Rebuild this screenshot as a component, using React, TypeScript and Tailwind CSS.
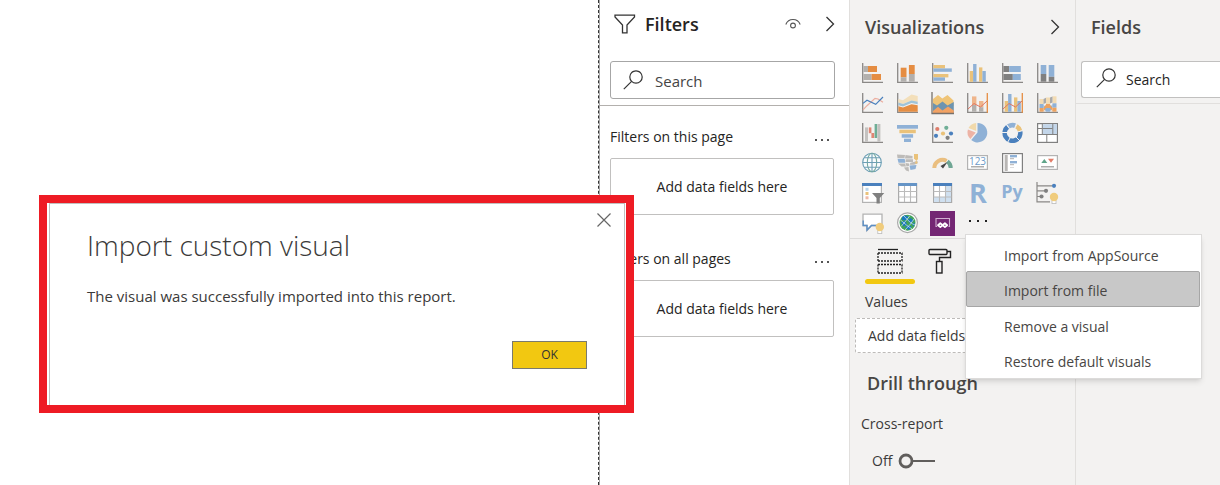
import type { ReactNode } from 'react';

const BLUE = '#8fb1d6';
const DEEP = '#4a80bd';
const ORANGE = '#e58d42';
const YELLOW = '#eac27a';
const GREY = '#b3b0ad';
const DARK = '#808080';

function Axes() {
  return <path d="M.7 0V19.3H21" fill="none" stroke="#8a8886" strokeWidth="1.3" />;
}

type Bar = [x: number, y: number, w: number, h: number, fill: string];

function Bars({ items }: { items: Bar[] }) {
  return (
    <>
      {items.map(([x, y, w, h, fill], i) => (
        <rect key={i} x={x} y={y} width={w} height={h} fill={fill} />
      ))}
    </>
  );
}

function Bulb({ x, y }: { x: number; y: number }) {
  return (
    <g transform={`translate(${x} ${y})`}>
      <rect x="-2" y="3" width="4" height="3.6" fill="#fff" stroke="#bbb" strokeWidth=".8" />
      <circle r="4.2" fill="#f0cc7c" />
    </g>
  );
}

const visuals: { name: string; art: ReactNode }[] = [
  {
    name: 'Stacked bar chart',
    art: <><Axes /><Bars items={[[1.4, 3, 4.6, 6, GREY], [6, 3, 9, 6, ORANGE], [1.4, 11, 8.2, 6, GREY], [9.6, 11, 9.4, 6, ORANGE]]} /></>,
  },
  {
    name: 'Stacked column chart',
    art: <><Axes /><Bars items={[[3.7, 4.7, 5.8, 9.6, ORANGE], [3.7, 14.3, 5.8, 4.4, GREY], [11.9, 2, 5.8, 9, ORANGE], [11.9, 11, 5.8, 7.7, GREY]]} /></>,
  },
  {
    name: 'Clustered bar chart',
    art: <><Axes /><Bars items={[[1.4, 2, 11.6, 3.4, YELLOW], [1.4, 5.4, 18.4, 3.4, BLUE], [1.4, 11, 15, 3.4, YELLOW], [1.4, 14.4, 11.6, 3.4, BLUE]]} /></>,
  },
  {
    name: 'Clustered column chart',
    art: <><Axes /><Bars items={[[2.7, 8, 3.4, 10.7, YELLOW], [6.1, 1, 3.4, 17.7, BLUE], [12, 4.4, 3.4, 14.3, YELLOW], [15.4, 8, 3.4, 10.7, BLUE]]} /></>,
  },
  {
    name: '100% stacked bar chart',
    art: <><Axes /><Bars items={[[1.4, 3, 5.8, 6, DARK], [7.2, 3, 11.6, 6, BLUE], [1.4, 11, 9.4, 6, DARK], [10.8, 11, 8, 6, BLUE]]} /></>,
  },
  {
    name: '100% stacked column chart',
    art: <><Axes /><Bars items={[[3.7, 2, 5.6, 9, BLUE], [3.7, 11, 5.6, 7.7, DARK], [11.7, 2, 5.6, 11.8, BLUE], [11.7, 13.8, 5.6, 4.9, DARK]]} /></>,
  },
  {
    name: 'Line chart',
    art: (
      <>
        <Axes />
        <path d="M1 16.8 5 12.7 13 5.3 16 6 21 9.3" fill="none" stroke="#ecae9f" strokeWidth="1.2" />
        <path d="M1 10.4 5 7.3 13.7 11.3 21 4" fill="none" stroke={DEEP} strokeWidth="1.2" />
      </>
    ),
  },
  {
    name: 'Area chart',
    art: (
      <>
        <Axes />
        <path d="M1.4 6 6 7.3 14.5 1.5 20.7 3V9L14.5 7.5 6 11 1.4 10Z" fill="#f3dfba" />
        <path d="M1.4 9.5 6 11 14.5 7.5 20.7 8.7V11.2L14.5 10 6 13.5 1.4 12.2Z" fill="#9fc3d8" />
        <path d="M1.4 13.2 6 14.5 14.5 11.3 20.7 12.2V18.7H1.4Z" fill={ORANGE} />
      </>
    ),
  },
  {
    name: 'Stacked area chart',
    art: (
      <>
        <path d="M1 6 6 2 10.3 5.5 15.5 2 21.500 7.500V13H1Z" fill="#efc477" />
        <path d="M1 10 5 12.500 10.500 8.500 15.500 12.500 21.800 9V20H1Z" fill="#6d94b0" />
        <path d="M1 20V18L6 13.800 10.500 17.500 16 13.500 21.800 17.500V20Z" fill="#f2a263" />
        <path d="M0-1V20.500H22" fill="none" stroke="#77716b" strokeWidth="1.3" />
      </>
    ),
  },
  {
    name: 'Line and stacked column chart',
    art: (
      <>
        <Axes />
        <Bars items={[[5, 3.4, 4.4, 8.6, '#efb58b'], [5, 12, 4.4, 6.7, GREY], [12, 8, 4.4, 6.2, '#efb58b'], [12, 14.2, 4.4, 4.5, GREY]]} />
        <path d="M1 16 7 10.5 13.5 14 20 8" fill="none" stroke="#df7460" strokeWidth="1" />
        <path d="M20.3 0V19.8" stroke={ORANGE} strokeWidth="1.3" />
      </>
    ),
  },
  {
    name: 'Line and clustered column chart',
    art: (
      <>
        <Axes />
        <Bars items={[[2.7, 8, 3.4, 10.7, YELLOW], [6.1, 1, 3.4, 17.7, BLUE], [12, 4.4, 3.4, 14.3, YELLOW], [15.4, 8, 3.4, 10.7, BLUE]]} />
        <path d="M1 16 7 10.5 13.5 14 20 8" fill="none" stroke="#df7460" strokeWidth="1" />
        <path d="M20.3 0V19.8" stroke={ORANGE} strokeWidth="1.3" />
      </>
    ),
  },
  {
    name: 'Ribbon chart',
    art: (
      <>
        <Axes />
        <Bars
          items={[
            [2.5, 6, 4, 5, '#f3dcb4'], [2.5, 11, 4, 4, BLUE], [2.5, 15, 4, 3.7, '#eda25f'],
            [9, 4.5, 4, 6.5, '#f3dcb4'], [9, 11, 4, 4, '#eda25f'], [9, 15, 4, 3.7, BLUE],
            [15.5, 3.3, 4, 7, '#f3dcb4'], [15.5, 10.3, 4, 4.4, BLUE], [15.5, 14.7, 4, 4, '#eda25f'],
          ]}
        />
        <path d="M6.5 6 9 4.700V10L6.500 11ZM13 4.500 15.500 3.500V9.500L13 10.500Z" fill="#a9a9a9" />
        <path d="M6.5 11.500 9 15V18.500L6.500 15ZM13 15 15.500 11V14.500L13 18.500Z" fill={BLUE} />
        <path d="M6.5 15 9 11.500V15L6.500 18.500ZM13 11.500 15.500 15V18.500L13 15Z" fill="#eda25f" />
      </>
    ),
  },
  {
    name: 'Waterfall chart',
    art: <><Axes /><Bars items={[[3, 4.4, 3, 14.3, '#c4c2c0'], [6.8, 4.4, 2.6, 5.8, '#e08674'], [9.4, 10, 2.8, 5, '#e08674'], [12.6, 1, 2.6, 14, '#6fae96'], [15.4, 1, 3, 17.7, '#c4c2c0']]} /></>,
  },
  {
    name: 'Funnel',
    art: <Bars items={[[0, 2, 21, 3.7, BLUE], [2.4, 6.7, 16.4, 3.5, YELLOW], [4.7, 11.2, 11.4, 3.5, BLUE], [7, 15.7, 7, 3.3, BLUE]]} />,
  },
  {
    name: 'Scatter chart',
    art: (
      <>
        <Axes />
        <circle cx="5.3" cy="6" r="2.1" fill="#de7d6b" />
        <circle cx="14.3" cy="4.8" r="2.1" fill="#6fae96" />
        <circle cx="11" cy="10.5" r="2.1" fill={YELLOW} />
        <circle cx="4" cy="12.8" r="2.1" fill={DEEP} />
        <circle cx="19" cy="10.5" r="2.1" fill={DEEP} />
        <circle cx="15.6" cy="14.8" r="2.1" fill={DARK} />
      </>
    ),
  },
  {
    name: 'Pie chart',
    art: (
      <>
        <path d="M10.5 9.5V0A9.7 9.7 0 1 1 4.2 17Z" fill={BLUE} />
        <path d="M9.2 8V0A9.3 9.3 0 0 0 1.500 5Z" fill="#f1d9ab" />
        <path d="M8.700 9.400.900 6.600A9.300 9.300 0 0 0 3.400 16Z" fill="#edb3a5" />
      </>
    ),
  },
  {
    name: 'Donut chart',
    art: (
      <g fill="none" strokeWidth="4.600">
        <path d="M18.100 8.300A7.800 7.800 0 1 1 5.600 3.900" stroke={DEEP} />
        <path d="M6.200 3.500A7.800 7.800 0 0 1 13.600 2.800" stroke={BLUE} />
        <path d="M14.400 3.200A7.800 7.800 0 0 1 18 7.800" stroke={YELLOW} />
        <path d="M7.500 5.500 3.500 0M12.700 5 15-1M15.500 9 22 7.300M14 14 18.500 18.500M8 15 5 20.500M5 9.500H-1" stroke="#f3f2f1" strokeWidth="1" />
      </g>
    ),
  },
  {
    name: 'Treemap',
    art: (
      <>
        <rect x=".6" y=".6" width="19.8" height="18.8" fill="#fff" stroke="#808080" strokeWidth="1.2" />
        <path d="M5.5 1.2H20V11H5.5Z" fill="#c3d6ea" />
        <path d="M5.3 0V11.5M0 11.5H20.4M9.8 11.5V20M5.3 5.5H15.5M15.8 0V11.5M1 5.5H5" stroke="#808080" strokeWidth="1" />
      </>
    ),
  },
  {
    name: 'Map',
    art: (
      <g fill="none" stroke="#6d9fb5" strokeWidth="1.1">
        <circle cx="10" cy="9.5" r="9.3" fill="#f8fbfd" />
        <ellipse cx="10" cy="9.5" rx="4.7" ry="9.3" stroke="#79ab9f" />
        <path d="M10 .2V18.8M.7 9.5H19.3M2.2 4.8H17.8M2.2 14.2H17.8" />
      </g>
    ),
  },
  {
    name: 'Filled map',
    art: (
      <>
        <path d="M0 1.500 8 2 7.500 5H.5ZM8.500 2 15.500 3V5.500H8ZM1 10.500H8L9 13.500 4.500 13.500ZM8.700 6.300H16V9H8.500Z" fill="#bdbbb8" />
        <path d="M.5 5.700H7.700L8.300 9.700H1.500ZM12.500 12.500 19.500 12 18.500 16 13.500 17Z" fill={BLUE} />
        <path d="M13.500 9.700 20.500 8V10.500L17 11.700H12.500ZM8.500 10 12 10.500V13L9.500 13.500ZM7 14.500 11.500 14 12 18.500 9 17.500Z" fill="#bdbbb8" />
        <path d="M17 1H21V6L19.500 8 17 5.500Z" fill={YELLOW} />
        <circle cx="19.300" cy="9.500" r="1.200" fill={YELLOW} />
      </>
    ),
  },
  {
    name: 'Gauge',
    art: (
      <>
        <path d="M2.300 15A8.200 8.200 0 0 1 14.600 7.900" fill="none" stroke="#eabf80" strokeWidth="4" />
        <path d="M15.400 8.400A8.200 8.200 0 0 1 18.700 15" fill="none" stroke="#6fa694" strokeWidth="4" />
        <path d="M8.500 13 15.500 9 11 15.500Z" fill="#444" />
      </>
    ),
  },
  {
    name: 'Card',
    art: (
      <>
        <rect x=".6" y="2.6" width="19.8" height="13.8" fill="#fff" stroke="#b3b3b3" strokeWidth="1.2" />
        <text x="10.5" y="11.500" textAnchor="middle" className="font-['Open_Sans',sans-serif] text-[10px]" fill="#6c9bc9">123</text>
        <path d="M4 13.8H17" stroke="#999" strokeWidth="1.2" />
      </>
    ),
  },
  {
    name: 'Multi-row card',
    art: (
      <>
        <rect x=".6" y=".6" width="19.8" height="18.8" fill="#fff" stroke="#808080" strokeWidth="1.2" />
        <Bars items={[[2.7, 2, 3, 16, '#b9b7b5'], [8, 2, 7, 2.4, BLUE], [8, 5.2, 4, 1, GREY], [8, 8, 7, 2.4, BLUE], [8, 11.2, 4, 1, GREY], [8, 14, 4, 1, '#ddd']]} />
      </>
    ),
  },
  {
    name: 'KPI',
    art: (
      <>
        <rect x=".6" y="2.6" width="19.8" height="13.8" fill="#fff" stroke="#b3b3b3" strokeWidth="1.2" />
        <path d="M4.3 10 7.3 6 10.3 10Z" fill="#5fa58a" />
        <path d="M11 5.700H17L14 9.800Z" fill="#e27c68" />
        <path d="M4 13.800H17" stroke="#999" strokeWidth="1.200" />
      </>
    ),
  },
  {
    name: 'Slicer',
    art: (
      <>
        <rect x=".6" y=".6" width="18.8" height="18.8" fill="#fff" stroke="#b3b3b3" strokeWidth="1.2" />
        <Bars items={[[0, 0, 20, 3, DEEP], [3.5, 4.8, 3, 3, '#b9d4ea'], [3.5, 9, 3, 3, YELLOW], [3.5, 13.3, 3, 3, '#efb9a8']]} />
        <path d="M10 10H22.3L17.8 15V20.5H14.5V15Z" fill="#808080" />
      </>
    ),
  },
  {
    name: 'Table',
    art: (
      <>
        <rect x="1.6" y=".6" width="18" height="18.8" fill="#fff" stroke="#aaa" strokeWidth="1.2" />
        <path d="M7.5 3V19M13.5 3V19M1.6 8.5H19.5M1.6 14H19.5" stroke="#bbb" strokeWidth="1.1" />
        <rect x="1" y="0" width="19" height="3" fill="#6594c6" />
      </>
    ),
  },
  {
    name: 'Matrix',
    art: (
      <>
        <rect x="1.6" y=".6" width="18" height="18.8" fill="#fff" stroke="#aaa" strokeWidth="1.2" />
        <path d="M13.5 3H19V19H2V14H13.5Z" fill="#cfe0f0" />
        <path d="M7.5 3V19M13.5 3V19M1.6 8.5H19.5M1.6 14H19.5" stroke="#bbb" strokeWidth="1.1" />
        <rect x="1" y="0" width="19" height="3" fill={DEEP} />
      </>
    ),
  },
  {
    name: 'R script visual',
    art: <text x="11" y="19.5" textAnchor="middle" className="font-['Open_Sans',sans-serif] text-[27px] font-bold" fill={BLUE}>R</text>,
  },
  {
    name: 'Python visual',
    art: <text x="10" y="15" textAnchor="middle" className="font-['Open_Sans',sans-serif] text-[18px] font-bold" fill={BLUE}>Py</text>,
  },
  {
    name: 'Key influencers',
    art: (
      <>
        <path d="M0-1V18.8H13M0 2.8H15M0 7.8H8M0 13.5H4" fill="none" stroke="#8a8886" strokeWidth="1.2" />
        <circle cx="17" cy="2.8" r="2.1" fill={DEEP} />
        <circle cx="9" cy="7.8" r="2.1" fill={DARK} />
        <circle cx="4.5" cy="13.5" r="2.1" fill={DARK} />
        <Bulb x={17} y={14} />
      </>
    ),
  },
  {
    name: 'Q&A',
    art: (
      <>
        <path d="M1 1.2H20V12.5H9.5L5 17.5V12.5H1Z" fill="#fff" stroke="#b3b3b3" strokeWidth="1.3" />
        <path d="M1.2 7.5V12.5H5V17L9.5 12.5H15" fill="none" stroke="#5c8fc5" strokeWidth="1.4" />
        <Bulb x={17.8} y={14} />
      </>
    ),
  },
  {
    name: 'ArcGIS Maps',
    art: (
      <>
        <circle cx="10.5" cy="9.7" r="9.9" fill="#fff" stroke="#a9a9a9" strokeWidth="1.2" />
        <circle cx="10.5" cy="9.7" r="8" fill="#43a35a" />
        <path d="M5 4 8 2.200 12 4 9 7.500 5 7ZM4 9 8.500 8 10 11.500 6.500 13.500ZM10.500 7 14 5 16.500 8 13.500 11ZM8 14.500 11.500 12 14.500 13.500 12 17ZM15 11 18 9.500 16.500 13.500Z" fill="#1878bf" />
        <path d="M3 6.500Q10 13 15 16M7 3Q14 11 18 12M4 13.500Q9 8 13 2.500M8 17Q14 11 17 6" fill="none" stroke="#d8ebf5" strokeWidth=".7" />
      </>
    ),
  },
  {
    name: 'Power Apps',
    art: (
      <>
        <rect x="-2" y="-2" width="25" height="25" fill="#742774" />
        <path d="M5 13.500H4V5.500H17.500V13.500H16.500" fill="none" stroke="#cfaed0" strokeWidth="1.1" />
        <path d="M10.600 12.200 8.300 10.300 6 12.200 8.300 14.100ZM10.600 12.200 12.900 10.300 15.200 12.200 12.900 14.100Z" fill="none" stroke="#fff" strokeWidth="1.8" strokeLinejoin="round" />
      </>
    ),
  },
];

const menuItems = ['Import from AppSource', 'Import from file', 'Remove a visual', 'Restore default visuals'];

function SearchIcon() {
  return (
    <svg viewBox="0 0 20 20" className="h-5 w-5 shrink-0" fill="none" stroke="#333" strokeWidth="1.2" aria-hidden="true">
      <circle cx="13" cy="7" r="6.2" />
      <path d="M8.6 11.4.8 19.2" />
    </svg>
  );
}

function Chevron() {
  return (
    <svg viewBox="0 0 10 16" className="h-4 w-[10px]" fill="none" stroke="#333" strokeWidth="1.3" aria-hidden="true">
      <path d="M1.5 1 8.5 8 1.5 15" />
    </svg>
  );
}

function FilterSection({ title }: { title: string }) {
  return (
    <section className="mb-[34px]">
      <div className="flex h-5 items-center justify-between pr-[5px]">
        <h3 className="text-sm">{title}</h3>
        <button aria-label={`${title} options`} className="flex gap-1 pt-[6px]">
          <span className="h-[2px] w-[2px] bg-[#555]" />
          <span className="h-[2px] w-[2px] bg-[#555]" />
          <span className="h-[2px] w-[2px] bg-[#555]" />
        </button>
      </div>
      <div className="mt-[11px] flex h-[57px] items-center justify-center rounded-[2px] border border-[#c1c0bf] text-sm">
        Add data fields here
      </div>
    </section>
  );
}

function FiltersPane() {
  return (
    <aside className="w-[250px] shrink-0 border-l border-[#a6a6a6] bg-white">
      <header className="flex h-[61px] items-center pr-[14px] pb-[13px] pl-[14px]">
        <svg viewBox="0 0 22 20" className="h-5 w-[22px]" fill="none" stroke="#333" strokeWidth="1.3" aria-hidden="true">
          <path d="M1 1.2H20.5V3L13 11V18.8H8.5V11L1 3Z" />
        </svg>
        <h2 className="ml-[9px] flex-1 text-lg font-semibold text-[#252423]">Filters</h2>
        <button aria-label="Show or hide filters" className="mr-6">
          <svg viewBox="0 0 16 12" className="h-3 w-4" fill="none" stroke="#555" strokeWidth="1.1" aria-hidden="true">
            <path d="M.8 6.5C2.2 3 5 1.5 8 1.5S13.8 3 15.2 6.5" />
            <circle cx="8" cy="7.5" r="2.4" />
          </svg>
        </button>
        <button aria-label="Collapse filters">
          <Chevron />
        </button>
      </header>
      <div className="border-b border-[#b3b0ad] pr-[14px] pb-[6px] pl-[10px]">
        <label className="flex h-[38px] items-center gap-3 rounded-[3px] border border-[#a6a6a6] px-3">
          <SearchIcon />
          <input type="search" aria-label="Search filters" placeholder="Search" className="min-w-0 flex-1 pt-[2px] text-[15px] outline-none placeholder:text-[#444]" />
        </label>
      </div>
      <div className="pt-[21px] pr-[15px] pl-[10px]">
        <FilterSection title="Filters on this page" />
        <FilterSection title="Filters on all pages" />
      </div>
    </aside>
  );
}

function VisualMenu() {
  return (
    <div role="menu" className="absolute top-[26px] left-[5px] z-10 w-[237px] border border-[#dcdbda] bg-white pt-[1px] pr-[1px] pb-[1px] text-sm text-[#484644] shadow-md">
      {menuItems.map((item) => (
        <button
          key={item}
          role="menuitem"
          className={
            item === 'Import from file'
              ? 'flex h-9 w-full items-center rounded-[2px] border border-[#a6a6a6] bg-[#c8c8c8] pt-1 pl-[37px]'
              : 'flex h-[35px] w-full items-center pl-[38px] pt-1'
          }
        >
          {item}
        </button>
      ))}
    </div>
  );
}

function VisualizationsPane() {
  return (
    <aside className="w-[226px] shrink-0 border-l border-[#e1dfdd] bg-[#f3f2f1] text-[#3b3a39]">
      <header className="flex h-[58px] items-center justify-between pr-[15px] pb-1 pl-[15px]">
        <h2 className="text-lg font-semibold text-[#484644]">Visualizations</h2>
        <button aria-label="Collapse visualizations">
          <Chevron />
        </button>
      </header>
      <div className="grid grid-cols-[repeat(6,35px)] border-b border-[#dcdbda] pl-[5px]">
        {visuals.map(({ name, art }) => (
          <button key={name} aria-label={name} className="flex h-[30px] items-center justify-center">
            <svg viewBox="0 0 21 20" className="h-5 w-[21px] overflow-visible" aria-hidden="true">
              {art}
            </svg>
          </button>
        ))}
        <div className="relative">
          <button aria-label="More options" className="flex h-[26px] w-full items-center justify-center gap-[6px]">
            <span className="h-[2px] w-[2px] bg-[#222]" />
            <span className="h-[2px] w-[2px] bg-[#222]" />
            <span className="h-[2px] w-[2px] bg-[#222]" />
          </button>
          <VisualMenu />
        </div>
      </div>
      <div className="flex gap-[2px] pl-[15px] pt-[9px]">
        <button aria-label="Fields" className="flex flex-col items-center gap-[5px]">
          <svg viewBox="0 0 26 26" className="h-[26px] w-[26px]" fill="none" stroke="#222" strokeWidth="1.3" aria-hidden="true">
            <path d="M1 1.5H21" />
            <path d="M1 5H25.5M1 13H25.5M1 16.5H25.5M1 25H25.5M1 5V13M25 5V13M1 16.5V25M25 16.5V25" strokeDasharray="2 1" />
          </svg>
          <span className="h-[5px] w-[50px] rounded-full bg-[#f2c811]" />
        </button>
        <button aria-label="Format" className="flex w-[46px] justify-center">
          <svg viewBox="0 0 24 26" className="h-[26px] w-6" fill="none" stroke="#222" strokeWidth="1.4" aria-hidden="true">
            <rect x="1" y="1.5" width="18" height="5" rx="1" />
            <path d="M19 3.5H22.5V9.5H11.500V13.500" />
            <rect x="8.500" y="13.500" width="5.500" height="11.500" />
          </svg>
        </button>
      </div>
      <h3 className="pt-[8px] pl-[15px] text-sm leading-5">Values</h3>
      <div className="mt-[6px] mr-[10px] ml-[5px] flex h-[35px] items-center rounded-[2px] border border-dashed border-[#bdbbb9] bg-white pl-3 text-sm">
        Add data fields here
      </div>
      <h2 className="pt-4 pl-[17px] text-lg leading-7 font-semibold text-[#484644]">Drill through</h2>
      <p className="pt-[17px] pl-[11px] text-sm leading-5">Cross-report</p>
      <label className="mt-[17px] mb-[14px] flex h-5 items-center gap-[6px] pl-[22px] text-sm">
        <span>Off</span>
        <input type="checkbox" role="switch" aria-label="Cross-report" className="sr-only" />
        <svg viewBox="0 0 38 16" className="h-4 w-[38px]" fill="none" stroke="#605e5c" aria-hidden="true">
          <circle cx="8" cy="8" r="6" strokeWidth="2.8" />
          <path d="M14.5 8H37" strokeWidth="2" />
        </svg>
      </label>
    </aside>
  );
}

function FieldsPane() {
  return (
    <aside className="w-[145px] shrink-0 border-l border-[#e1dfdd] bg-[#f3f2f1]">
      <header className="flex h-[61px] items-center pb-[7px] pl-[15px]">
        <h2 className="text-lg font-semibold text-[#484644]">Fields</h2>
      </header>
      <div className="border-b border-[#e1dfdd] pb-[5px] pl-[5px]">
        <label className="flex h-[37px] items-center gap-[10px] rounded-l-[3px] border border-r-0 border-[#c1c0bf] bg-white pb-1 pl-[14px]">
          <SearchIcon />
          <input type="search" aria-label="Search fields" placeholder="Search" className="w-20 min-w-0 pt-1 text-sm outline-none placeholder:text-[#252423]" />
        </label>
      </div>
    </aside>
  );
}

function ImportDialog() {
  return (
    <div role="dialog" aria-labelledby="import-title" className="absolute top-[195px] left-[39px] z-20 w-[595px] border-8 border-[#ee1b24] bg-white pr-[1px] pl-[2px]">
      <div className="border border-b-0 border-[#c1c0bf] pr-[37px] pb-9 pl-[37px] text-[#3b3a39]">
        <div className="-mr-[25px] flex justify-end pt-[8px]">
          <button aria-label="Close">
            <svg viewBox="0 0 16 16" className="h-4 w-4" stroke="#666" strokeWidth="1.2" aria-hidden="true">
              <path d="M1.5 1.5 14.5 14.5M14.5 1.5 1.5 14.5" />
            </svg>
          </button>
        </div>
        <h1 id="import-title" className="text-[28px] leading-[34px] font-light">Import custom visual</h1>
        <p className="mt-6 text-[15px] leading-5">The visual was successfully imported into this report.</p>
        <div className="mt-[35px] flex justify-end">
          <button className="h-7 w-[75px] border border-[#7a7a6e] bg-[#f2c811] text-xs text-[#333]">OK</button>
        </div>
      </div>
    </div>
  );
}

export default function App() {
  return (
    <div className="relative flex min-h-screen overflow-hidden bg-white font-['Open_Sans','Noto_Sans',sans-serif] text-[#252423]">
      <main className="flex-1 border-r border-dashed border-[#333]" />
      <FiltersPane />
      <VisualizationsPane />
      <FieldsPane />
      <ImportDialog />
    </div>
  );
}
